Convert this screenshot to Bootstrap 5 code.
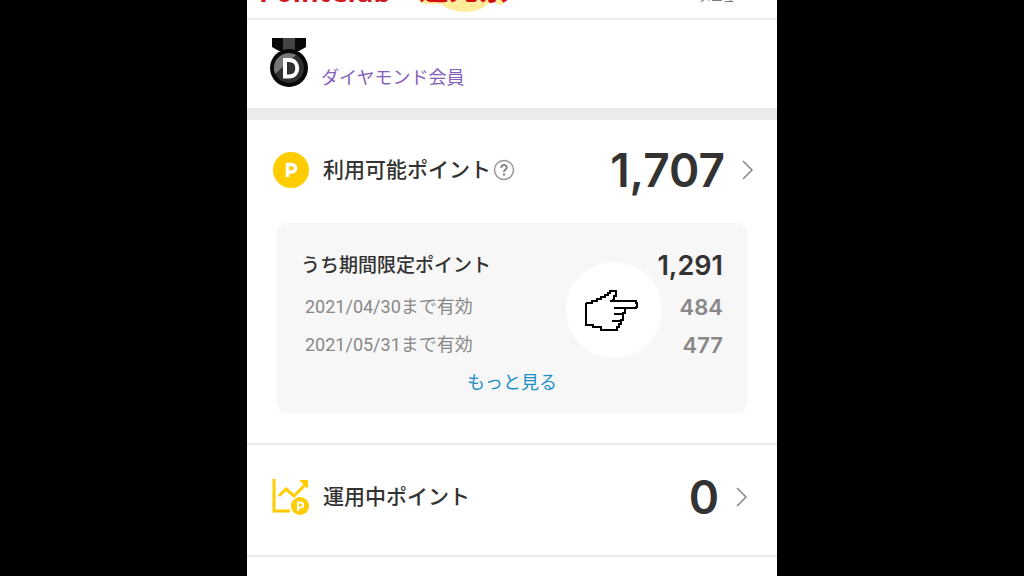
<!DOCTYPE html>
<html lang="ja">
<head>
<meta charset="utf-8">
<meta name="viewport" content="width=device-width, initial-scale=1">
<title>PointClub</title>
<link href="https://cdn.jsdelivr.net/npm/bootstrap@5.3.0/dist/css/bootstrap.min.css" rel="stylesheet">
<style>
body{background:#000;color:#333;font-family:Roboto,"Noto Sans CJK JP",sans-serif}
.phone{max-width:530px;background:#fff}
.line-b{border-bottom:2px solid #ebebeb}
.topbar{height:20px;padding:0 30px 12px 12px}
.brand{font:700 27px/28px "Open Sans",sans-serif;color:#d01820}
.promo{font-weight:900;font-size:30px;line-height:28px;color:#d00c10;white-space:nowrap}
.promo-wrap{position:relative;margin-left:28px}
.promo-wrap svg{position:absolute;left:-2px;bottom:-6px}
.promo-wrap span{position:relative}
.topmenu{font-size:12px;line-height:16px;color:#777}
.member{height:88px;padding:17px 24px 0 23px}
.rank{font-size:18px;line-height:24px;color:#8560b8;margin:29px 0 0 12px}
.band{height:12px;background:#ebebeb}
.point-row{padding:0 22px 0 25px}
.first{height:103px;padding-bottom:3px}
.second{height:112px;padding-right:28px;padding-bottom:7px}
.label-l{font-size:21px;line-height:30px;font-weight:500;margin-left:13px}
.num{font-family:Inter,"Open Sans",sans-serif;font-weight:600}
.num-xl{font-size:46px;line-height:54px}
.num-l{font-size:27px;line-height:44px}
.num-m{font-size:22px;line-height:38px}
.detail{background:#f7f7f7;border-radius:12px;margin:0 29px 30px;padding:21px 25px 11px;position:relative}
.label-m{font-size:19px;line-height:44px;font-weight:500}
.limit{font-size:18px;line-height:38px;color:#888;padding-left:4px}
.more{font-size:18px;line-height:38px;color:#1e8fc6}
.pointer{position:absolute;right:86px;top:39px}
.help{margin-left:2px}
</style>
</head>
<body>
<main class="phone mx-auto min-vh-100 overflow-hidden">
<header class="topbar line-b d-flex align-items-end">
<span class="brand">PointClub</span>
<div class="promo-wrap"><svg width="96" height="30" viewBox="0 0 96 30" aria-hidden="true"><path d="M0 0V15Q2 22 10 22H24Q34 30 50 30 64 29 72 21L78 20Q84 27 88 19 94 16 94 0Z" fill="#ffeb99"/></svg><span class="promo">還元祭</span></div>
<span class="topmenu ms-auto">メニュー</span>
</header>
<section class="member d-flex align-items-start">
<svg width="39" height="52" viewBox="0 0 39 52" role="img" aria-label="D"><path d="M2 1H36V10L29 14H9L2 10Z" fill="#080808"/><path d="M13 1H25V16H13Z" fill="#444"/><circle cx="19" cy="31" r="19" fill="#080808"/><circle cx="19" cy="31" r="15" fill="#303030"/><path d="M5 37A15 15 0 0 1 26 18Z" fill="#777"/><path d="M15 23H19C30 23 30 39.500 19 39.500H15Z" fill="#303030" stroke="#fff" stroke-width="4"/></svg>
<span class="rank">ダイヤモンド会員</span>
</section>
<div class="band"></div>
<section class="line-b">
<div class="point-row first d-flex align-items-center">
<svg width="38" height="38" viewBox="0 0 38 38" aria-hidden="true"><circle cx="19" cy="19" r="18" fill="#fc0"/><path d="M15.500 26V13.500H19.500C25 13.500 25 21 19.500 21H15.500" fill="none" stroke="#fff" stroke-width="3.500"/></svg>
<span class="label-l">利用可能ポイント</span>
<button class="btn p-0 border-0 d-flex help" aria-label="ヘルプ"><svg width="22" height="22" viewBox="0 0 22 22" fill="none"><circle cx="11" cy="11" r="9.500" stroke="#999" stroke-width="1.500"/><path d="M8.300 9C8.300 5 14 5.200 13.700 8.700 13.500 10.500 11 10.500 11 13" stroke="#888" stroke-width="2"/><circle cx="11" cy="15.500" r="1.300" fill="#888"/></svg></button>
<span class="num num-xl ms-auto">1,707</span>
<svg class="ms-3" width="14" height="22" viewBox="0 0 14 22" fill="none" stroke="#888" stroke-width="1.500" aria-hidden="true"><path d="M2 2L11 11 2 20"/></svg>
</div>
<div class="detail">
<div class="d-flex justify-content-between"><span class="label-m">うち期間限定ポイント</span><span class="num num-l">1,291</span></div>
<div class="d-flex justify-content-between limit"><span>2021/04/30まで有効</span><span class="num num-m">484</span></div>
<div class="d-flex justify-content-between limit"><span>2021/05/31まで有効</span><span class="num num-m">477</span></div>
<div class="d-flex justify-content-center"><a href="#" class="more text-decoration-none">もっと見る</a></div>
<svg class="pointer" width="96" height="96" viewBox="0 0 96 96" role="img" aria-label="指差し"><circle cx="48" cy="48" r="48" fill="#fff"/><path d="M20 41H26V39H31V37H35V35H39V33H42V31H44V29H50V34H48V38H46M44 39H70V41H71V45H70V46H48M59 46V51H56M48 52H57V58H54M46 59H55V62H53V65H51V68H35V65H27V63H20V41" fill="none" stroke="#000" stroke-width="2"/></svg>
</div>
</section>
<section class="point-row second line-b d-flex align-items-center">
<svg width="38" height="38" viewBox="0 0 38 38" fill="none" aria-hidden="true"><path d="M2 1V33H18M7 18L14 11 22 18 33 7" stroke="#fc0" stroke-width="3"/><path d="M27 2H36V11Z" fill="#fc0"/><circle cx="28" cy="28" r="9" fill="#fc0"/><path d="M26 33V24.500H28.500C32 24.500 32 29.500 28.500 29.500H26" stroke="#fff" stroke-width="2"/></svg>
<span class="label-l">運用中ポイント</span>
<span class="num num-xl ms-auto">0</span>
<svg class="ms-3" width="14" height="22" viewBox="0 0 14 22" fill="none" stroke="#888" stroke-width="1.500" aria-hidden="true"><path d="M2 2L11 11 2 20"/></svg>
</section>
</main>
<script src="https://cdn.jsdelivr.net/npm/bootstrap@5.3.0/dist/js/bootstrap.bundle.min.js"></script>
</body>
</html>
